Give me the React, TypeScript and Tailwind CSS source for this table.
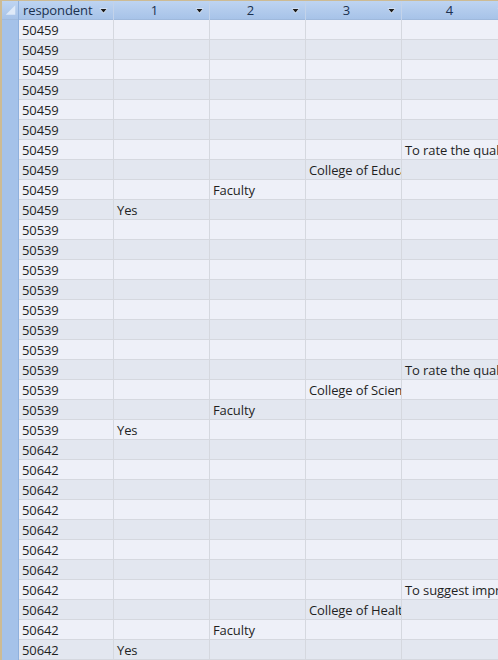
import React from "react";

type Row = { id: string; c1?: string; c2?: string; c3?: string; c4?: string };

const group = (id: string, blanks: number, q4: string, college: string): Row[] => [
  ...Array.from({ length: blanks }, () => ({ id })),
  { id, c4: q4 },
  { id, c3: college },
  { id, c2: "Faculty" },
  { id, c1: "Yes" },
];

const rows: Row[] = [
  ...group("50459", 6, "To rate the quality of", "College of Education"),
  ...group("50539", 7, "To rate the quality of", "College of Science"),
  ...group("50642", 7, "To suggest improvements", "College of Health"),
];

const Arrow = () => (
  <svg width="9" height="6" viewBox="0 0 9 6" className="shrink-0">
    <path d="M0.5 0.5 L8.5 0.5 L4.5 5.5 Z" fill="#ffffff" opacity="0.7" />
    <path d="M1.5 1 L7.5 1 L4.5 4.5 Z" fill="#1b1b1b" />
  </svg>
);

const HeadCell = ({ label, left }: { label: string; left?: boolean }) => (
  <div className="flex items-center h-full border-r border-[#c3d3ea] pr-[5px]">
    <span className={`flex-1 truncate ${left ? "pl-[4px]" : "text-center"}`}>{label}</span>
    <Arrow />
  </div>
);

const Cell = ({ text }: { text?: string }) => (
  <div className="border-r border-b border-[#d5d8df] pl-[3px] h-[20px] leading-[21px] whitespace-nowrap overflow-hidden">
    {text}
  </div>
);

export default function App() {
  return (
    <div
      className="w-[498px] h-[660px] overflow-hidden bg-[#eef0f7] text-[13px] tracking-[-0.1px] text-[#1f1f1f]"
      style={{ fontFamily: '"Open Sans", "Noto Sans", sans-serif' }}
    >
      <div className="h-[1px] bg-[#cdbb94]" />
      <div className="grid grid-cols-[19px_95px_96px_96px_96px_110px] h-[19px] text-[#1b314f] bg-gradient-to-b from-[#bed4f1] to-[#a7c3e8] border-b border-[#9fb9dc]">
        <div className="flex border-r border-[#8fb0dc]">
          <div className="w-[2px] bg-[#cdbb94]" />
          <svg width="17" height="18" viewBox="0 0 17 18">
            <path d="M14 4 L14 14 L4 14 Z" fill="#dfeaf8" />
          </svg>
        </div>
        <HeadCell label="respondent" left />
        <HeadCell label="1" />
        <HeadCell label="2" />
        <HeadCell label="3" />
        <HeadCell label="4" />
      </div>
      <div className="grid grid-cols-[19px_95px_96px_96px_96px_110px]">
        {rows.map((r, i) => (
          <div key={i} className={`contents ${i % 2 === 0 ? "[&>div]:bg-[#eef0f8]" : "[&>div]:bg-[#e3e7f0]"}`}>
            <div className="flex h-[20px] !bg-[#a5c2e9] border-r border-[#8fb0dc]">
              <div className="w-[2px] bg-[#cdbb94]" />
            </div>
            <Cell text={r.id} />
            <Cell text={r.c1} />
            <Cell text={r.c2} />
            <Cell text={r.c3} />
            <Cell text={r.c4} />
          </div>
        ))}
      </div>
    </div>
  );
}
